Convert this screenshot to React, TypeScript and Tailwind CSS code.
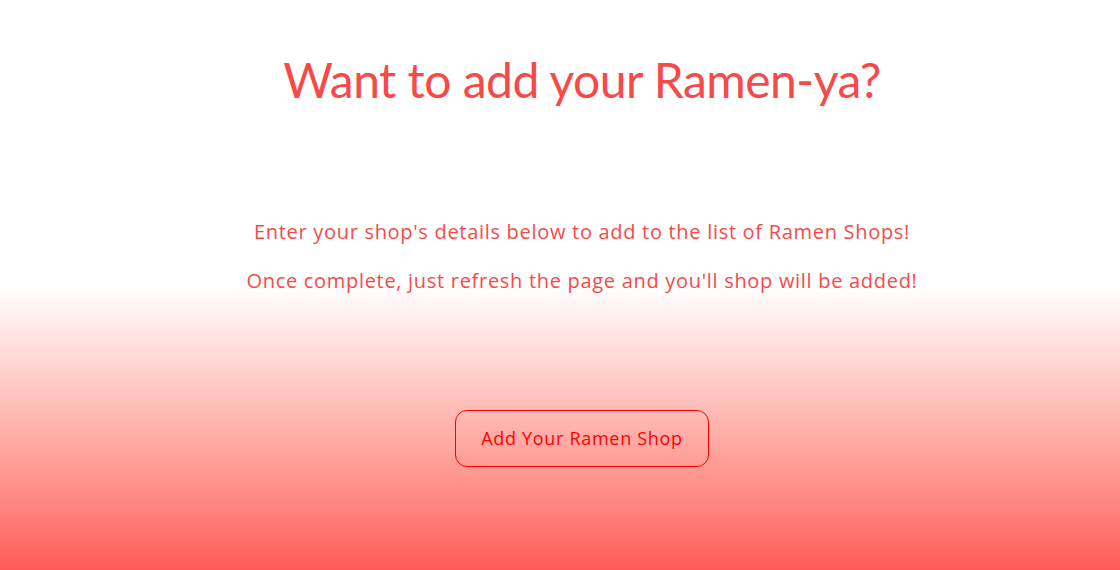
import React from "react";

export default function App() {
  return (
    <div className="w-[1120px] h-[570px] pl-[44px] bg-linear-to-b from-white from-50% to-[#ff5959] flex flex-col items-center overflow-hidden">
      <h1 className="mt-[50px] text-[48px] leading-[60px] text-[#f64a4a] tracking-[-0.5px] font-['Lato','Noto_Sans',sans-serif]">
        Want to add your Ramen-ya?
      </h1>
      <div className="mt-[110px] flex flex-col items-center gap-[25px] text-[20px] leading-[24px] text-[#f64a4a] tracking-[0.7px] font-['Open_Sans','Noto_Sans',sans-serif]">
        <p>Enter your shop's details below to add to the list of Ramen Shops!</p>
        <p>Once complete, just refresh the page and you'll shop will be added!</p>
      </div>
      <button className="mt-[117px] w-[254px] h-[57px] rounded-[12px] border border-[#ff0000] text-[#f00] text-[18px] tracking-[0.7px] font-['Open_Sans','Noto_Sans',sans-serif]">
        Add Your Ramen Shop
      </button>
    </div>
  );
}
